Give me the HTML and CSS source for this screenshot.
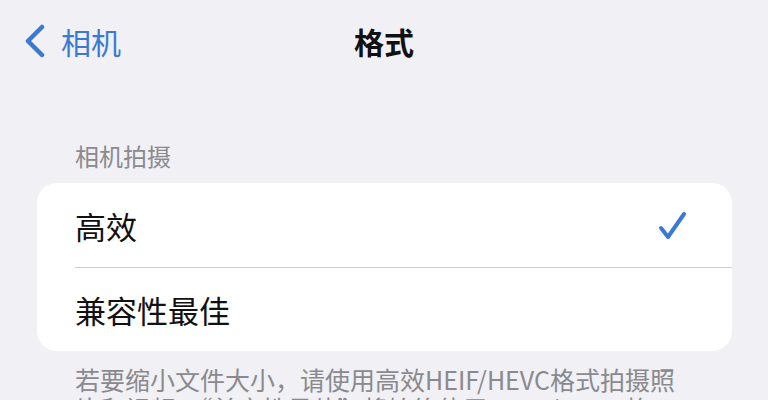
FILE: index.html
```html
<!DOCTYPE html>
<html lang="zh-CN">

<head>
    <meta charset="utf-8">
    <title>格式</title>
    <meta name="viewport" content="width=device-width, initial-scale=1.0">
    <link rel="stylesheet" href="styles.css">
</head>

<body>
    <div class="nav">
        <a class="back" href="#">
            <svg class="chevron" width="22" height="34" viewBox="0 0 22 34">
                <polyline points="18,3 4,17 18,31" />
            </svg>
            <span>相机</span>
        </a>
        <div class="title">格式</div>
        <div></div>
    </div>

    <div class="group-header">相机拍摄</div>
    <div class="card">
        <div class="row">
            <span class="label">高效</span>
            <svg class="check" width="30" height="30" viewBox="0 0 30 30">
                <polyline points="3,18 10,27 26,4" />
            </svg>
        </div>
        <div class="row">
            <span class="label">兼容性最佳</span>
        </div>
    </div>
    <div class="group-footer">若要缩小文件大小，请使用高效HEIF/HEVC格式拍摄照片和视频。“兼容性最佳”将始终使用JPEG/H.264格式。</div>
</body>

</html>
```

FILE: styles.css
```css
body {
    margin: 0;
    background: #f0f0f5;
    font-family: "Noto Sans CJK SC", "Noto Sans", sans-serif;
    color: #111;
}

.nav {
    display: grid;
    grid-template-columns: 1fr auto 1fr;
    align-items: center;
    height: 82px;
}

.back {
    display: flex;
    align-items: center;
    gap: 15px;
    padding-left: 24px;
    color: #3b7ad2;
    text-decoration: none;
    font-size: 30px;
}

.chevron polyline {
    fill: none;
    stroke: #3b7ad2;
    stroke-width: 4.5;
    stroke-linecap: round;
    stroke-linejoin: round;
}

.title {
    font-size: 30px;
    font-weight: bold;
}

.group-header {
    margin-top: 57px;
    padding-left: 75px;
    font-size: 24px;
    line-height: 34px;
    color: #8a8a8e;
}

.card {
    margin: 10px 36px 0 37px;
    background: #fff;
    border-radius: 20px;
    overflow: hidden;
}

.row {
    display: flex;
    align-items: center;
    justify-content: space-between;
    height: 84px;
    margin-left: 38px;
    padding-right: 44px;
    font-size: 31px;
}

.row + .row {
    height: 83px;
    border-top: 1px solid #cfcfd3;
}

.check polyline {
    fill: none;
    stroke: #3b7ad2;
    stroke-width: 4;
    stroke-linecap: round;
    stroke-linejoin: round;
}

.group-footer {
    margin-top: 14px;
    padding: 0 70px 0 75px;
    font-size: 25px;
    line-height: 29px;
    color: #8a8a8e;
}
```
